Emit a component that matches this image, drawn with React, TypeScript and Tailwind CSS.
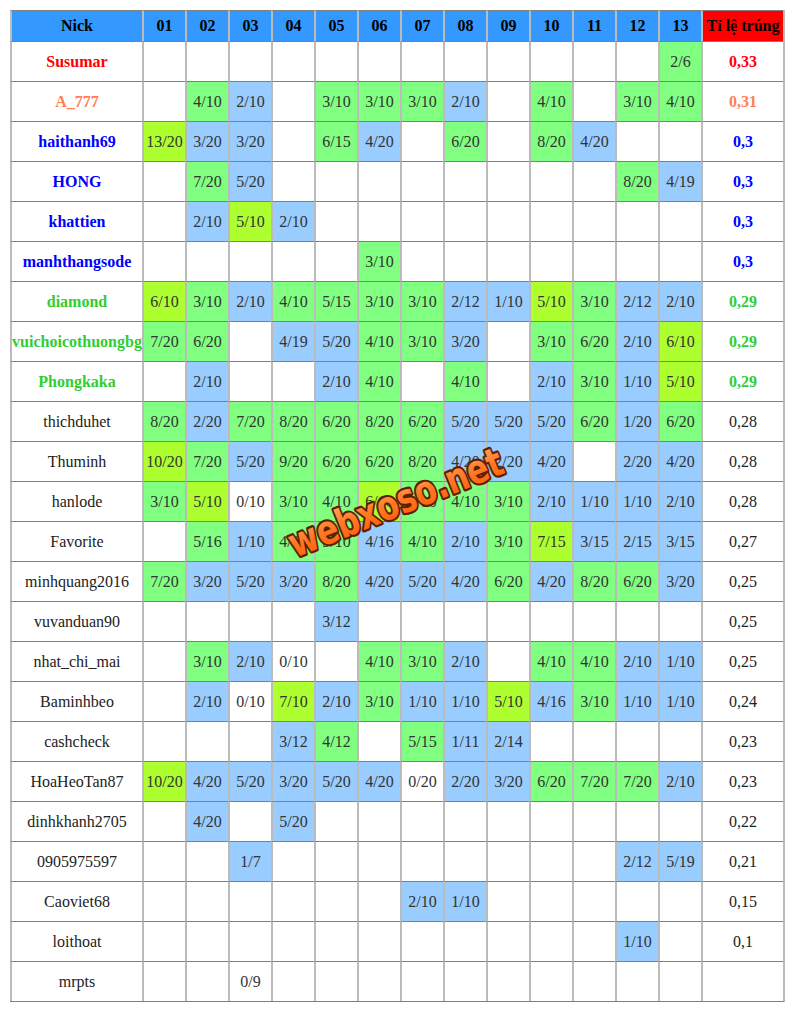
import React from "react";

type NickStyle = "red" | "orange" | "blue" | "green" | "plain";

// each row: nick, style, 13 cells ("-" = empty, suffix g/b/l/w = colour), rate
const rows: [string, NickStyle, string, string][] = [
  ["Susumar", "red", "- - - - - - - - - - - - 2/6g", "0,33"],
  ["A_777", "orange", "- 4/10g 2/10b - 3/10g 3/10g 3/10g 2/10b - 4/10g - 3/10g 4/10g", "0,31"],
  ["haithanh69", "blue", "13/20l 3/20b 3/20b - 6/15g 4/20b - 6/20g - 8/20g 4/20b - -", "0,3"],
  ["HONG", "blue", "- 7/20g 5/20b - - - - - - - - 8/20g 4/19b", "0,3"],
  ["khattien", "blue", "- 2/10b 5/10l 2/10b - - - - - - - - -", "0,3"],
  ["manhthangsode", "blue", "- - - - - 3/10g - - - - - - -", "0,3"],
  ["diamond", "green", "6/10l 3/10g 2/10b 4/10g 5/15g 3/10g 3/10g 2/12b 1/10b 5/10l 3/10g 2/12b 2/10b", "0,29"],
  ["vuichoicothuongbg", "green", "7/20g 6/20g - 4/19b 5/20b 4/10g 3/10g 3/20b - 3/10g 6/20g 2/10b 6/10l", "0,29"],
  ["Phongkaka", "green", "- 2/10b - - 2/10b 4/10g - 4/10g - 2/10b 3/10g 1/10b 5/10l", "0,29"],
  ["thichduhet", "plain", "8/20g 2/20b 7/20g 8/20g 6/20g 8/20g 6/20g 5/20b 5/20b 5/20b 6/20g 1/20b 6/20g", "0,28"],
  ["Thuminh", "plain", "10/20l 7/20g 5/20b 9/20g 6/20g 6/20g 8/20g 4/20b 2/20b 4/20b - 2/20b 4/20b", "0,28"],
  ["hanlode", "plain", "3/10g 5/10l 0/10w 3/10g 4/10g 6/10l 3/10g 4/10g 3/10g 2/10b 1/10b 1/10b 2/10b", "0,28"],
  ["Favorite", "plain", "- 5/16g 1/10b 4/10g 5/10g 4/16b 4/10g 2/10b 3/10g 7/15l 3/15b 2/15b 3/15b", "0,27"],
  ["minhquang2016", "plain", "7/20g 3/20b 5/20b 3/20b 8/20g 4/20b 5/20b 4/20b 6/20g 4/20b 8/20g 6/20g 3/20b", "0,25"],
  ["vuvanduan90", "plain", "- - - - 3/12b - - - - - - - -", "0,25"],
  ["nhat_chi_mai", "plain", "- 3/10g 2/10b 0/10w - 4/10g 3/10g 2/10b - 4/10g 4/10g 2/10b 1/10b", "0,25"],
  ["Baminhbeo", "plain", "- 2/10b 0/10w 7/10l 2/10b 3/10g 1/10b 1/10b 5/10l 4/16b 3/10g 1/10b 1/10b", "0,24"],
  ["cashcheck", "plain", "- - - 3/12b 4/12g - 5/15g 1/11b 2/14b - - - -", "0,23"],
  ["HoaHeoTan87", "plain", "10/20l 4/20b 5/20b 3/20b 5/20b 4/20b 0/20w 2/20b 3/20b 6/20g 7/20g 7/20g 2/10b", "0,23"],
  ["dinhkhanh2705", "plain", "- 4/20b - 5/20b - - - - - - - - -", "0,22"],
  ["0905975597", "plain", "- - 1/7b - - - - - - - - 2/12b 5/19b", "0,21"],
  ["Caoviet68", "plain", "- - - - - - 2/10b 1/10b - - - - -", "0,15"],
  ["loithoat", "plain", "- - - - - - - - - - - 1/10b -", "0,1"],
  ["mrpts", "plain", "- - 0/9w - - - - - - - - - -", ""],
];

const nickCls: Record<NickStyle, string> = {
  red: "font-bold text-[#ff0000]",
  orange: "font-bold text-[#ff7f50]",
  blue: "font-bold text-[#0000ff]",
  green: "font-bold text-[#33cc33]",
  plain: "text-[#222222]",
};

const bgCls: Record<string, string> = {
  g: "bg-[#80ff80]",
  b: "bg-[#99ccff]",
  l: "bg-[#adff2f]",
  w: "bg-white",
};

const cellBase =
  "flex items-center justify-center whitespace-nowrap border-l-2 border-t border-l-[#bbbbbb] border-t-[#808080]";

const headers = ["01", "02", "03", "04", "05", "06", "07", "08", "09", "10", "11", "12", "13"];

const Watermark: React.FC = () => (
  <svg
    className="pointer-events-none absolute left-0 top-0"
    width="775"
    height="991"
    viewBox="0 0 775 991"
  >
    <defs>
      <linearGradient id="wm" x1="0" y1="0" x2="0" y2="1">
        <stop offset="0" stopColor="#ffb070" />
        <stop offset="0.5" stopColor="#ff7a26" />
        <stop offset="1" stopColor="#ff5a00" />
      </linearGradient>
    </defs>
    <text
      x="285"
      y="548"
      transform="rotate(-22 285 548)"
      textLength="228"
      lengthAdjust="spacingAndGlyphs"
      fontFamily="'DejaVu Sans', sans-serif"
      fontWeight="bold"
      fontSize="40"
      fill="url(#wm)"
      stroke="#5e1f00"
      strokeWidth="4.5"
      strokeLinejoin="round"
      paintOrder="stroke"
    >
      webxoso.net
    </text>
  </svg>
);

export default function App() {
  return (
    <div className="bg-white min-h-screen pt-[10px] pl-[10px] font-[family-name:'Liberation_Serif',serif] text-[16px]">
      <div className="relative w-[775px] border-r-2 border-b border-r-[#bbbbbb] border-b-[#808080]">
        <div className="grid grid-cols-[132px_repeat(13,43px)_82px]">
          <div className={`${cellBase} h-[31px] bg-[#3399ff] font-bold text-black`}>Nick</div>
          {headers.map((h) => (
            <div key={h} className={`${cellBase} h-[31px] bg-[#3399ff] font-bold text-black`}>
              {h}
            </div>
          ))}
          <div className={`${cellBase} h-[31px] bg-[#ff0000] font-bold text-black`}>Tỉ lệ trúng</div>

          {rows.map(([nick, style, cells, rate]) => (
            <React.Fragment key={nick}>
              <div className={`${cellBase} h-[40px] bg-white ${nickCls[style]}`}>{nick}</div>
              {cells.split(" ").map((c, i) => {
                if (c === "-")
                  return <div key={i} className={`${cellBase} h-[40px] bg-white`} />;
                const color = c.slice(-1);
                return (
                  <div key={i} className={`${cellBase} h-[40px] text-[#333333] ${bgCls[color]}`}>
                    {c.slice(0, -1)}
                  </div>
                );
              })}
              <div className={`${cellBase} h-[40px] bg-white ${nickCls[style]}`}>{rate}</div>
            </React.Fragment>
          ))}
        </div>
        <Watermark />
      </div>
    </div>
  );
}
